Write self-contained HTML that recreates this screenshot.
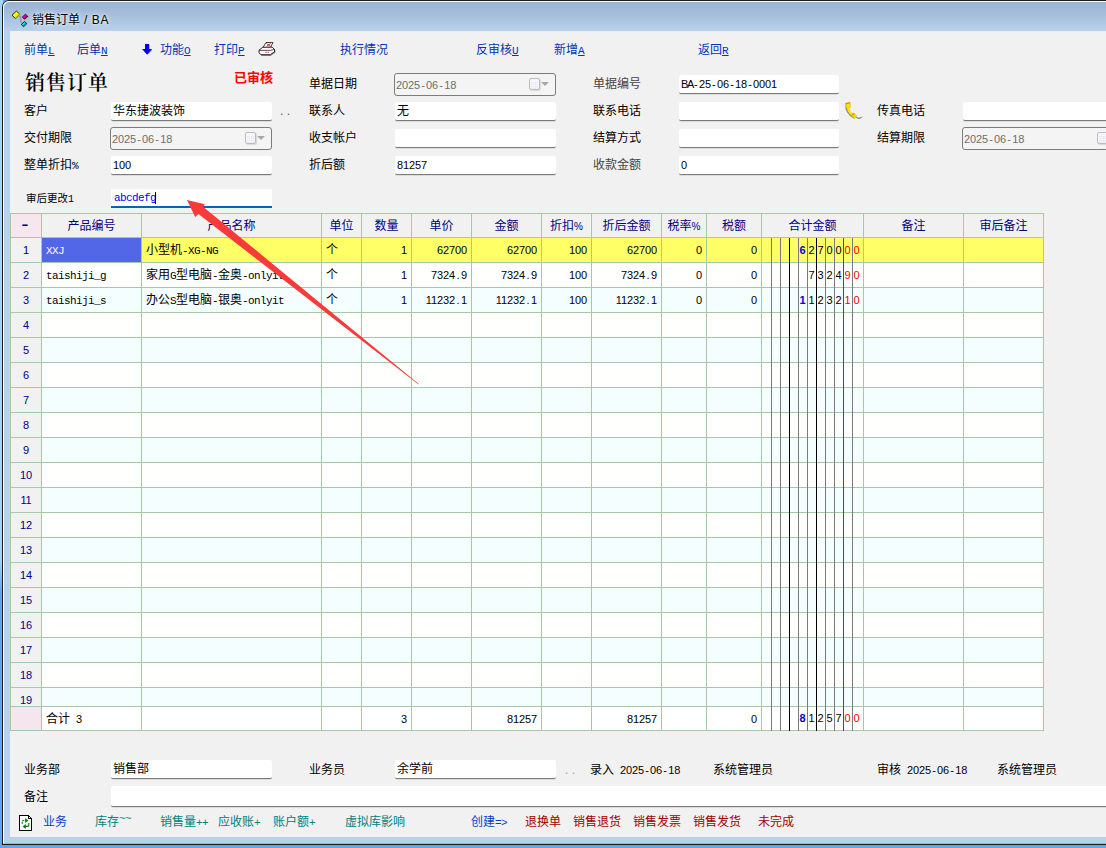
<!DOCTYPE html>
<html lang="zh-CN"><head><meta charset="utf-8"><title>销售订单 / BA</title>
<style>
*{box-sizing:border-box;margin:0;padding:0}
html,body{width:1106px;height:848px;overflow:hidden}
body{position:relative;background:#64a5ee;font:12px/14px "Liberation Sans","Noto Sans CJK SC",sans-serif;color:#000}
#deskL{position:absolute;left:0;top:0;width:3px;height:848px;background:linear-gradient(#a4d6fa 0,#a0d4f9 66%,#64a5ee 70%,#64a5ee)}
#win{position:absolute;left:2px;top:0;width:1200px;height:845px;background:#b9d1ea;border:1px solid #1c1c1c;border-top-left-radius:7px;border-right:0}
#win:before{content:"";position:absolute;left:0;top:0;right:0;bottom:0;border-left:1px solid #fff;border-top:1px solid #fff;border-bottom:1px solid #3fe0f5;border-top-left-radius:6px}
#tbar{position:absolute;left:1px;top:1px;right:0;height:29px;background:linear-gradient(#98b3d2,#a7c0dd 50%,#b9d1ea);border-top-left-radius:6px}
#cl{position:absolute;left:10px;top:31px;width:1100px;height:806px;background:#f1f1f1}
.t{position:absolute;white-space:nowrap;font:12px/14px "Liberation Sans","Noto Sans CJK SC",sans-serif}
.m{font:11px/14px "Liberation Mono","Noto Sans CJK SC",monospace;letter-spacing:-0.6px}
.n,.t.n{font:11px/14px "Liberation Sans","Noto Sans CJK SC",sans-serif;letter-spacing:-0.1px}
.p{display:inline-block;width:6px;text-align:center;letter-spacing:0}
.lk{color:#0433b4}
.lk u,.lk .u{font:11px/14px "Liberation Mono","Noto Sans CJK SC",monospace;text-decoration:underline}
.inp{position:absolute;height:19px;background:#fff;border-bottom:1px solid #7b7b7b;border-radius:2px;box-shadow:0 1px 0 #dcdcdc}
.inp .t{left:2px;top:2px}
.dt{position:absolute;height:23px;border:1px solid #7c7c7c;border-radius:3px;background:#f4f4f4}
.dt .t{left:1px;top:4px;color:#6d6d6d}
.cal{position:absolute;right:15px;top:4px;width:11px;height:12px;border:1px solid #c2baba;border-radius:2px;background:#f4f7ff;box-shadow:1px 1px 1px #d8d8d8}
.cal:before{content:"";position:absolute;left:1px;top:3px;width:7px;height:7px;background:#dfe3ee;background-image:radial-gradient(circle,#f8faff 0.8px,transparent 1px);background-size:2.330px 2.330px}
.dd{position:absolute;right:6px;top:8px;width:0;height:0;border-left:4px solid transparent;border-right:4px solid transparent;border-top:4px solid #a9a9a2}
#grid{position:absolute;left:10px;top:213px;width:1034px;height:518px;background:#a5c9a5;overflow:hidden}
.c{position:absolute;overflow:hidden;white-space:nowrap}
.c>span{position:absolute;top:5px;font:12px/14px "Liberation Sans","Noto Sans CJK SC",sans-serif}
.c>span.m{font:11px/14px "Liberation Mono","Noto Sans CJK SC",monospace;letter-spacing:-0.6px}
.c span.n,.t.n{font:11px/14px "Liberation Sans","Noto Sans CJK SC",sans-serif;letter-spacing:-0.1px}
.h>span{color:#000080;left:0;right:0;text-align:center}
.vl{position:absolute;top:25px;width:1px;height:493px}
</style></head>
<body>
<div id="deskL"></div><div id="win"><div id="tbar"></div></div><div id="cl"></div>
<svg style="position:absolute;left:11px;top:10px" width="18" height="18" viewBox="0 0 18 18">
<path d="M7.900 6.300H9.750V12.200H11.400" fill="none" stroke="#8c8c8c" stroke-width="1"/>
<path d="M1 5.300L5.300 1.100 8.800 4.200 4.600 8.600z" fill="#ffff00" stroke="#000" stroke-width="0.800"/>
<path d="M3.600 7.600L7.800 3.300 8.800 4.200 4.600 8.600z" fill="#d8d800"/>
<path d="M11.400 7L14.500 4.150 16.800 6.500 13.500 9.300z" fill="#f000d0" stroke="#000" stroke-width="0.800"/>
<path d="M12.600 8.400L15.800 5.500 16.500 6.500 13.500 9z" fill="#a00030"/>
<path d="M10.200 14.500L13.500 11.500 15.900 13.600 12.600 16.650z" fill="#00e0e0" stroke="#000" stroke-width="0.800"/>
<path d="M11.600 15.700L14.900 12.700 15.600 13.600 12.600 16.300z" fill="#009898"/>
</svg>
<span class="t" style="left:32px;top:13px;text-shadow:0 0 6px #fff,0 0 3px #fff;">销售订单<span style="letter-spacing:0.6px"> / BA</span></span>
<span class="t lk" style="left:24px;top:43px">前单<span class="u">L</span></span>
<span class="t lk" style="left:77px;top:43px">后单<span class="u">N</span></span>
<svg style="position:absolute;left:142px;top:44px" width="10" height="11" viewBox="0 0 10 11"><path d="M3.600 0.600h4v5h3l-5 5.400-4.500-5.400h2.500z" fill="#404060" opacity="0.550"/><path d="M3 0h4v5h3l-5 5.600-5-5.600h3z" fill="#0000ff"/></svg>
<span class="t lk" style="left:160px;top:43px">功能<span class="u">O</span></span>
<span class="t lk" style="left:214px;top:43px">打印<span class="u">P</span></span>
<svg style="position:absolute;left:258px;top:42px" width="18" height="15" viewBox="0 0 18 15">
<path d="M3.200 13.400h9.300l4.300-3.200v-2" fill="none" stroke="#8c8c8c" stroke-width="1.400"/>
<path d="M5 5.500l3-5h7l-2.600 5z" fill="#fff" stroke="#111" stroke-width="0.800"/>
<path d="M8.600 1.600l3.800 2.600M12.600 1.400l-3.800 2.800" stroke="#e01010" stroke-width="0.900"/>
<path d="M1 8.200l3.800-3h9.400l2.300 2.200v2.400l-4.200 2.900h-9.300l-2-1.900z" fill="#fbfbfb" stroke="#111" stroke-width="0.900"/>
<path d="M1.200 8.400h11.200l4-1" fill="none" stroke="#111" stroke-width="0.700"/>
<path d="M7.400 10.300h1.200M9.600 10.300h1.200" stroke="#e01010" stroke-width="1"/>
</svg>
<span class="t lk" style="left:340px;top:43px">执行情况</span>
<span class="t lk" style="left:476px;top:43px">反审核<span class="u">U</span></span>
<span class="t lk" style="left:554px;top:43px">新增<span class="u">A</span></span>
<span class="t lk" style="left:698px;top:43px">返回<span class="u">R</span></span>
<span class="t" style="left:25px;top:71px;font:600 20px/24px 'Liberation Serif','Noto Serif CJK SC',serif;letter-spacing:1px">销售订单</span>
<span class="t" style="left:234px;top:70px;font:bold 13px/16px 'Liberation Sans','Noto Sans CJK SC',sans-serif;color:#f00">已审核</span>
<span class="t" style="left:309px;top:77px;">单据日期</span>
<div class="dt" style="left:394px;top:73px;width:162px"><span class="t n">2025<span class="p">-</span>06<span class="p">-</span>18</span><i class="cal"></i><i class="dd"></i></div>
<span class="t" style="left:593px;top:77px;color:#444">单据编号</span>
<div class="inp" style="left:679px;top:75px;width:160px;height:19px;"><span class="t n"><span style="letter-spacing:-1.400px">BA</span><span class="p">-</span>25<span class="p">-</span>06<span class="p">-</span>18<span class="p">-</span>0001</span></div>
<span class="t" style="left:24px;top:104px;">客户</span>
<div class="inp" style="left:111px;top:102px;width:161px;height:19px;"><span class="t">华东捷波装饰</span></div>
<span class="t" style="left:280px;top:104px;color:#555;">. .</span>
<span class="t" style="left:309px;top:104px;">联系人</span>
<div class="inp" style="left:395px;top:102px;width:161px;height:19px;"><span class="t">无</span></div>
<span class="t" style="left:593px;top:104px;">联系电话</span>
<div class="inp" style="left:679px;top:102px;width:160px;height:19px;"><span class="t"></span></div>
<svg style="position:absolute;left:844px;top:101px" width="19" height="19" viewBox="0 0 19 19">
<path d="M12.300 16.300c1.600 1.300 4.600 1.400 5.500-.5" fill="none" stroke="#5a5a5a" stroke-width="1"/>
<path d="M3.200 4c-.9 4.600 2.400 9.300 6.600 11.600" fill="none" stroke="#3c5a32" stroke-width="3.400" stroke-linecap="round" opacity="0.600"/>
<path d="M3.800 3.600c-.7 4.600 2.400 9.200 6.400 11.400" fill="none" stroke="#ffe400" stroke-width="2.600" stroke-linecap="round"/>
<path d="M1.500 2.300l4.500-1.100.7 4.900-4.100.9z" fill="#ffe600" stroke="#d4a000" stroke-width="0.400"/>
<path d="M1.500 2.300l4.500-1.100.1 1-4.400 1.200z" fill="#f07818"/>
<path d="M7.700 13.600l2.300-1.500 2.900 2.800-2.700 2.700z" fill="#ffd800" stroke="#d4a000" stroke-width="0.400"/>
<path d="M7.700 13.600l2.300-1.500.7.700-2.400 1.600z" fill="#e09010"/>
</svg>
<span class="t" style="left:877px;top:104px;">传真电话</span>
<div class="inp" style="left:963px;top:102px;width:200px;height:19px;"><span class="t"></span></div>
<span class="t" style="left:24px;top:131px;">交付期限</span>
<div class="dt" style="left:110px;top:127px;width:162px"><span class="t n">2025<span class="p">-</span>06<span class="p">-</span>18</span><i class="cal"></i><i class="dd"></i></div>
<span class="t" style="left:309px;top:131px;">收支帐户</span>
<div class="inp" style="left:395px;top:129px;width:161px;height:19px;"><span class="t"></span></div>
<span class="t" style="left:593px;top:131px;">结算方式</span>
<div class="inp" style="left:679px;top:129px;width:160px;height:19px;"><span class="t"></span></div>
<span class="t" style="left:877px;top:131px;">结算期限</span>
<div class="dt" style="left:962px;top:127px;width:162px"><span class="t n">2025<span class="p">-</span>06<span class="p">-</span>18</span><i class="cal"></i><i class="dd"></i></div>
<span class="t" style="left:24px;top:158px;">整单折扣<span class="m">%</span></span>
<div class="inp" style="left:111px;top:156px;width:161px;height:19px;"><span class="t n">100</span></div>
<span class="t" style="left:309px;top:158px;">折后额</span>
<div class="inp" style="left:395px;top:156px;width:161px;height:19px;"><span class="t n">81257</span></div>
<span class="t" style="left:593px;top:158px;color:#444">收款金额</span>
<div class="inp" style="left:679px;top:156px;width:160px;height:19px;"><span class="t n">0</span></div>
<span class="t" style="left:26px;top:191px;font-size:10.500px;">审后更改<span class="m" style="font-size:10px">1</span></span>
<div class="inp" style="left:111px;top:189px;width:161px;height:19px;border-bottom:2px solid #0a62b8;border-radius:0;box-shadow:none"><span class="t m" style="color:#00f;left:3px;top:2px">abcdefg</span><i style="position:absolute;left:44px;top:3px;width:1px;height:12px;background:#000"></i></div>
<div id="grid"><div class="c h" style="left:1px;top:1px;width:30px;height:23px;background:#f6e6ef"><span><b style="display:inline-block;font:bold 13px/14px Liberation Mono,monospace;transform:scale(1.45,1);position:relative;top:-1.5px;left:-1px">-</b></span></div>
<div class="c h" style="left:32px;top:1px;width:99px;height:23px;background:#f1f1f1"><span>产品编号</span></div>
<div class="c h" style="left:132px;top:1px;width:179px;height:23px;background:#f1f1f1"><span>产品名称</span></div>
<div class="c h" style="left:312px;top:1px;width:39px;height:23px;background:#f1f1f1"><span>单位</span></div>
<div class="c h" style="left:352px;top:1px;width:49px;height:23px;background:#f1f1f1"><span>数量</span></div>
<div class="c h" style="left:402px;top:1px;width:59px;height:23px;background:#f1f1f1"><span>单价</span></div>
<div class="c h" style="left:462px;top:1px;width:69px;height:23px;background:#f1f1f1"><span>金额</span></div>
<div class="c h" style="left:532px;top:1px;width:49px;height:23px;background:#f1f1f1"><span>折扣<i class="n" style="font-style:normal;font-size:10px">%</i></span></div>
<div class="c h" style="left:582px;top:1px;width:69px;height:23px;background:#f1f1f1"><span>折后金额</span></div>
<div class="c h" style="left:652px;top:1px;width:44px;height:23px;background:#f1f1f1"><span>税率<i class="n" style="font-style:normal;font-size:10px">%</i></span></div>
<div class="c h" style="left:697px;top:1px;width:54px;height:23px;background:#f1f1f1"><span>税额</span></div>
<div class="c h" style="left:752px;top:1px;width:101px;height:23px;background:#f1f1f1"><span>合计金额</span></div>
<div class="c h" style="left:854px;top:1px;width:99px;height:23px;background:#f1f1f1"><span>备注</span></div>
<div class="c h" style="left:954px;top:1px;width:79px;height:23px;background:#f1f1f1"><span>审后备注</span></div>
<div class="c" style="left:1px;top:25px;width:30px;height:24px;background:#f1f1f1"><span class="n" style="left:0;right:0;text-align:center;color:#000080">1</span></div>
<div class="c" style="left:32px;top:25px;width:99px;height:24px;background:#5266e8"><span style="left:4px;color:#fff"><i class="m" style="font-style:normal">XXJ</i></span></div>
<div class="c" style="left:132px;top:25px;width:179px;height:24px;background:#ffff66"><span style="left:4px;color:#000">小型机<i class="m" style="font-style:normal">-XG-NG</i></span></div>
<div class="c" style="left:312px;top:25px;width:39px;height:24px;background:#ffff66"><span style="left:4px;color:#000">个</span></div>
<div class="c" style="left:352px;top:25px;width:49px;height:24px;background:#ffff66"><span class="n" style="right:4px;color:#000">1</span></div>
<div class="c" style="left:402px;top:25px;width:59px;height:24px;background:#ffff66"><span class="n" style="right:4px;color:#000">62700</span></div>
<div class="c" style="left:462px;top:25px;width:69px;height:24px;background:#ffff66"><span class="n" style="right:4px;color:#000">62700</span></div>
<div class="c" style="left:532px;top:25px;width:49px;height:24px;background:#ffff66"><span class="n" style="right:4px;color:#000">100</span></div>
<div class="c" style="left:582px;top:25px;width:69px;height:24px;background:#ffff66"><span class="n" style="right:4px;color:#000">62700</span></div>
<div class="c" style="left:652px;top:25px;width:44px;height:24px;background:#ffff66"><span class="n" style="right:4px;color:#000">0</span></div>
<div class="c" style="left:697px;top:25px;width:54px;height:24px;background:#ffff66"><span class="n" style="right:4px;color:#000">0</span></div>
<div class="c" style="left:752px;top:25px;width:101px;height:24px;background:#ffff66"></div>
<div class="c" style="left:854px;top:25px;width:99px;height:24px;background:#ffff66"></div>
<div class="c" style="left:954px;top:25px;width:79px;height:24px;background:#ffff66"></div>
<div class="c" style="left:1px;top:50px;width:30px;height:24px;background:#f1f1f1"><span class="n" style="left:0;right:0;text-align:center;color:#000080">2</span></div>
<div class="c" style="left:32px;top:50px;width:99px;height:24px;background:#fffffd"><span style="left:4px;color:#000"><i class="m" style="font-style:normal">taishiji_g</i></span></div>
<div class="c" style="left:132px;top:50px;width:179px;height:24px;background:#fffffd"><span style="left:4px;color:#000">家用<i class="m" style="font-style:normal">G</i>型电脑<i class="m" style="font-style:normal">-</i>金奥<i class="m" style="font-style:normal">-onlyit</i></span></div>
<div class="c" style="left:312px;top:50px;width:39px;height:24px;background:#fffffd"><span style="left:4px;color:#000">个</span></div>
<div class="c" style="left:352px;top:50px;width:49px;height:24px;background:#fffffd"><span class="n" style="right:4px;color:#000">1</span></div>
<div class="c" style="left:402px;top:50px;width:59px;height:24px;background:#fffffd"><span class="n" style="right:4px;color:#000">7324<span class="p">.</span>9</span></div>
<div class="c" style="left:462px;top:50px;width:69px;height:24px;background:#fffffd"><span class="n" style="right:4px;color:#000">7324<span class="p">.</span>9</span></div>
<div class="c" style="left:532px;top:50px;width:49px;height:24px;background:#fffffd"><span class="n" style="right:4px;color:#000">100</span></div>
<div class="c" style="left:582px;top:50px;width:69px;height:24px;background:#fffffd"><span class="n" style="right:4px;color:#000">7324<span class="p">.</span>9</span></div>
<div class="c" style="left:652px;top:50px;width:44px;height:24px;background:#fffffd"><span class="n" style="right:4px;color:#000">0</span></div>
<div class="c" style="left:697px;top:50px;width:54px;height:24px;background:#fffffd"><span class="n" style="right:4px;color:#000">0</span></div>
<div class="c" style="left:752px;top:50px;width:101px;height:24px;background:#fffffd"></div>
<div class="c" style="left:854px;top:50px;width:99px;height:24px;background:#fffffd"></div>
<div class="c" style="left:954px;top:50px;width:79px;height:24px;background:#fffffd"></div>
<div class="c" style="left:1px;top:75px;width:30px;height:24px;background:#f1f1f1"><span class="n" style="left:0;right:0;text-align:center;color:#000080">3</span></div>
<div class="c" style="left:32px;top:75px;width:99px;height:24px;background:#f5fefe"><span style="left:4px;color:#000"><i class="m" style="font-style:normal">taishiji_s</i></span></div>
<div class="c" style="left:132px;top:75px;width:179px;height:24px;background:#f5fefe"><span style="left:4px;color:#000">办公<i class="m" style="font-style:normal">S</i>型电脑<i class="m" style="font-style:normal">-</i>银奥<i class="m" style="font-style:normal">-onlyit</i></span></div>
<div class="c" style="left:312px;top:75px;width:39px;height:24px;background:#f5fefe"><span style="left:4px;color:#000">个</span></div>
<div class="c" style="left:352px;top:75px;width:49px;height:24px;background:#f5fefe"><span class="n" style="right:4px;color:#000">1</span></div>
<div class="c" style="left:402px;top:75px;width:59px;height:24px;background:#f5fefe"><span class="n" style="right:4px;color:#000">11232<span class="p">.</span>1</span></div>
<div class="c" style="left:462px;top:75px;width:69px;height:24px;background:#f5fefe"><span class="n" style="right:4px;color:#000">11232<span class="p">.</span>1</span></div>
<div class="c" style="left:532px;top:75px;width:49px;height:24px;background:#f5fefe"><span class="n" style="right:4px;color:#000">100</span></div>
<div class="c" style="left:582px;top:75px;width:69px;height:24px;background:#f5fefe"><span class="n" style="right:4px;color:#000">11232<span class="p">.</span>1</span></div>
<div class="c" style="left:652px;top:75px;width:44px;height:24px;background:#f5fefe"><span class="n" style="right:4px;color:#000">0</span></div>
<div class="c" style="left:697px;top:75px;width:54px;height:24px;background:#f5fefe"><span class="n" style="right:4px;color:#000">0</span></div>
<div class="c" style="left:752px;top:75px;width:101px;height:24px;background:#f5fefe"></div>
<div class="c" style="left:854px;top:75px;width:99px;height:24px;background:#f5fefe"></div>
<div class="c" style="left:954px;top:75px;width:79px;height:24px;background:#f5fefe"></div>
<div class="c" style="left:1px;top:100px;width:30px;height:24px;background:#f1f1f1"><span class="n" style="left:0;right:0;text-align:center;color:#000080">4</span></div>
<div class="c" style="left:32px;top:100px;width:99px;height:24px;background:#fffffd"></div>
<div class="c" style="left:132px;top:100px;width:179px;height:24px;background:#fffffd"></div>
<div class="c" style="left:312px;top:100px;width:39px;height:24px;background:#fffffd"></div>
<div class="c" style="left:352px;top:100px;width:49px;height:24px;background:#fffffd"></div>
<div class="c" style="left:402px;top:100px;width:59px;height:24px;background:#fffffd"></div>
<div class="c" style="left:462px;top:100px;width:69px;height:24px;background:#fffffd"></div>
<div class="c" style="left:532px;top:100px;width:49px;height:24px;background:#fffffd"></div>
<div class="c" style="left:582px;top:100px;width:69px;height:24px;background:#fffffd"></div>
<div class="c" style="left:652px;top:100px;width:44px;height:24px;background:#fffffd"></div>
<div class="c" style="left:697px;top:100px;width:54px;height:24px;background:#fffffd"></div>
<div class="c" style="left:752px;top:100px;width:101px;height:24px;background:#fffffd"></div>
<div class="c" style="left:854px;top:100px;width:99px;height:24px;background:#fffffd"></div>
<div class="c" style="left:954px;top:100px;width:79px;height:24px;background:#fffffd"></div>
<div class="c" style="left:1px;top:125px;width:30px;height:24px;background:#f1f1f1"><span class="n" style="left:0;right:0;text-align:center;color:#000080">5</span></div>
<div class="c" style="left:32px;top:125px;width:99px;height:24px;background:#f5fefe"></div>
<div class="c" style="left:132px;top:125px;width:179px;height:24px;background:#f5fefe"></div>
<div class="c" style="left:312px;top:125px;width:39px;height:24px;background:#f5fefe"></div>
<div class="c" style="left:352px;top:125px;width:49px;height:24px;background:#f5fefe"></div>
<div class="c" style="left:402px;top:125px;width:59px;height:24px;background:#f5fefe"></div>
<div class="c" style="left:462px;top:125px;width:69px;height:24px;background:#f5fefe"></div>
<div class="c" style="left:532px;top:125px;width:49px;height:24px;background:#f5fefe"></div>
<div class="c" style="left:582px;top:125px;width:69px;height:24px;background:#f5fefe"></div>
<div class="c" style="left:652px;top:125px;width:44px;height:24px;background:#f5fefe"></div>
<div class="c" style="left:697px;top:125px;width:54px;height:24px;background:#f5fefe"></div>
<div class="c" style="left:752px;top:125px;width:101px;height:24px;background:#f5fefe"></div>
<div class="c" style="left:854px;top:125px;width:99px;height:24px;background:#f5fefe"></div>
<div class="c" style="left:954px;top:125px;width:79px;height:24px;background:#f5fefe"></div>
<div class="c" style="left:1px;top:150px;width:30px;height:24px;background:#f1f1f1"><span class="n" style="left:0;right:0;text-align:center;color:#000080">6</span></div>
<div class="c" style="left:32px;top:150px;width:99px;height:24px;background:#fffffd"></div>
<div class="c" style="left:132px;top:150px;width:179px;height:24px;background:#fffffd"></div>
<div class="c" style="left:312px;top:150px;width:39px;height:24px;background:#fffffd"></div>
<div class="c" style="left:352px;top:150px;width:49px;height:24px;background:#fffffd"></div>
<div class="c" style="left:402px;top:150px;width:59px;height:24px;background:#fffffd"></div>
<div class="c" style="left:462px;top:150px;width:69px;height:24px;background:#fffffd"></div>
<div class="c" style="left:532px;top:150px;width:49px;height:24px;background:#fffffd"></div>
<div class="c" style="left:582px;top:150px;width:69px;height:24px;background:#fffffd"></div>
<div class="c" style="left:652px;top:150px;width:44px;height:24px;background:#fffffd"></div>
<div class="c" style="left:697px;top:150px;width:54px;height:24px;background:#fffffd"></div>
<div class="c" style="left:752px;top:150px;width:101px;height:24px;background:#fffffd"></div>
<div class="c" style="left:854px;top:150px;width:99px;height:24px;background:#fffffd"></div>
<div class="c" style="left:954px;top:150px;width:79px;height:24px;background:#fffffd"></div>
<div class="c" style="left:1px;top:175px;width:30px;height:24px;background:#f1f1f1"><span class="n" style="left:0;right:0;text-align:center;color:#000080">7</span></div>
<div class="c" style="left:32px;top:175px;width:99px;height:24px;background:#f5fefe"></div>
<div class="c" style="left:132px;top:175px;width:179px;height:24px;background:#f5fefe"></div>
<div class="c" style="left:312px;top:175px;width:39px;height:24px;background:#f5fefe"></div>
<div class="c" style="left:352px;top:175px;width:49px;height:24px;background:#f5fefe"></div>
<div class="c" style="left:402px;top:175px;width:59px;height:24px;background:#f5fefe"></div>
<div class="c" style="left:462px;top:175px;width:69px;height:24px;background:#f5fefe"></div>
<div class="c" style="left:532px;top:175px;width:49px;height:24px;background:#f5fefe"></div>
<div class="c" style="left:582px;top:175px;width:69px;height:24px;background:#f5fefe"></div>
<div class="c" style="left:652px;top:175px;width:44px;height:24px;background:#f5fefe"></div>
<div class="c" style="left:697px;top:175px;width:54px;height:24px;background:#f5fefe"></div>
<div class="c" style="left:752px;top:175px;width:101px;height:24px;background:#f5fefe"></div>
<div class="c" style="left:854px;top:175px;width:99px;height:24px;background:#f5fefe"></div>
<div class="c" style="left:954px;top:175px;width:79px;height:24px;background:#f5fefe"></div>
<div class="c" style="left:1px;top:200px;width:30px;height:24px;background:#f1f1f1"><span class="n" style="left:0;right:0;text-align:center;color:#000080">8</span></div>
<div class="c" style="left:32px;top:200px;width:99px;height:24px;background:#fffffd"></div>
<div class="c" style="left:132px;top:200px;width:179px;height:24px;background:#fffffd"></div>
<div class="c" style="left:312px;top:200px;width:39px;height:24px;background:#fffffd"></div>
<div class="c" style="left:352px;top:200px;width:49px;height:24px;background:#fffffd"></div>
<div class="c" style="left:402px;top:200px;width:59px;height:24px;background:#fffffd"></div>
<div class="c" style="left:462px;top:200px;width:69px;height:24px;background:#fffffd"></div>
<div class="c" style="left:532px;top:200px;width:49px;height:24px;background:#fffffd"></div>
<div class="c" style="left:582px;top:200px;width:69px;height:24px;background:#fffffd"></div>
<div class="c" style="left:652px;top:200px;width:44px;height:24px;background:#fffffd"></div>
<div class="c" style="left:697px;top:200px;width:54px;height:24px;background:#fffffd"></div>
<div class="c" style="left:752px;top:200px;width:101px;height:24px;background:#fffffd"></div>
<div class="c" style="left:854px;top:200px;width:99px;height:24px;background:#fffffd"></div>
<div class="c" style="left:954px;top:200px;width:79px;height:24px;background:#fffffd"></div>
<div class="c" style="left:1px;top:225px;width:30px;height:24px;background:#f1f1f1"><span class="n" style="left:0;right:0;text-align:center;color:#000080">9</span></div>
<div class="c" style="left:32px;top:225px;width:99px;height:24px;background:#f5fefe"></div>
<div class="c" style="left:132px;top:225px;width:179px;height:24px;background:#f5fefe"></div>
<div class="c" style="left:312px;top:225px;width:39px;height:24px;background:#f5fefe"></div>
<div class="c" style="left:352px;top:225px;width:49px;height:24px;background:#f5fefe"></div>
<div class="c" style="left:402px;top:225px;width:59px;height:24px;background:#f5fefe"></div>
<div class="c" style="left:462px;top:225px;width:69px;height:24px;background:#f5fefe"></div>
<div class="c" style="left:532px;top:225px;width:49px;height:24px;background:#f5fefe"></div>
<div class="c" style="left:582px;top:225px;width:69px;height:24px;background:#f5fefe"></div>
<div class="c" style="left:652px;top:225px;width:44px;height:24px;background:#f5fefe"></div>
<div class="c" style="left:697px;top:225px;width:54px;height:24px;background:#f5fefe"></div>
<div class="c" style="left:752px;top:225px;width:101px;height:24px;background:#f5fefe"></div>
<div class="c" style="left:854px;top:225px;width:99px;height:24px;background:#f5fefe"></div>
<div class="c" style="left:954px;top:225px;width:79px;height:24px;background:#f5fefe"></div>
<div class="c" style="left:1px;top:250px;width:30px;height:24px;background:#f1f1f1"><span class="n" style="left:0;right:0;text-align:center;color:#000080">10</span></div>
<div class="c" style="left:32px;top:250px;width:99px;height:24px;background:#fffffd"></div>
<div class="c" style="left:132px;top:250px;width:179px;height:24px;background:#fffffd"></div>
<div class="c" style="left:312px;top:250px;width:39px;height:24px;background:#fffffd"></div>
<div class="c" style="left:352px;top:250px;width:49px;height:24px;background:#fffffd"></div>
<div class="c" style="left:402px;top:250px;width:59px;height:24px;background:#fffffd"></div>
<div class="c" style="left:462px;top:250px;width:69px;height:24px;background:#fffffd"></div>
<div class="c" style="left:532px;top:250px;width:49px;height:24px;background:#fffffd"></div>
<div class="c" style="left:582px;top:250px;width:69px;height:24px;background:#fffffd"></div>
<div class="c" style="left:652px;top:250px;width:44px;height:24px;background:#fffffd"></div>
<div class="c" style="left:697px;top:250px;width:54px;height:24px;background:#fffffd"></div>
<div class="c" style="left:752px;top:250px;width:101px;height:24px;background:#fffffd"></div>
<div class="c" style="left:854px;top:250px;width:99px;height:24px;background:#fffffd"></div>
<div class="c" style="left:954px;top:250px;width:79px;height:24px;background:#fffffd"></div>
<div class="c" style="left:1px;top:275px;width:30px;height:24px;background:#f1f1f1"><span class="n" style="left:0;right:0;text-align:center;color:#000080">11</span></div>
<div class="c" style="left:32px;top:275px;width:99px;height:24px;background:#f5fefe"></div>
<div class="c" style="left:132px;top:275px;width:179px;height:24px;background:#f5fefe"></div>
<div class="c" style="left:312px;top:275px;width:39px;height:24px;background:#f5fefe"></div>
<div class="c" style="left:352px;top:275px;width:49px;height:24px;background:#f5fefe"></div>
<div class="c" style="left:402px;top:275px;width:59px;height:24px;background:#f5fefe"></div>
<div class="c" style="left:462px;top:275px;width:69px;height:24px;background:#f5fefe"></div>
<div class="c" style="left:532px;top:275px;width:49px;height:24px;background:#f5fefe"></div>
<div class="c" style="left:582px;top:275px;width:69px;height:24px;background:#f5fefe"></div>
<div class="c" style="left:652px;top:275px;width:44px;height:24px;background:#f5fefe"></div>
<div class="c" style="left:697px;top:275px;width:54px;height:24px;background:#f5fefe"></div>
<div class="c" style="left:752px;top:275px;width:101px;height:24px;background:#f5fefe"></div>
<div class="c" style="left:854px;top:275px;width:99px;height:24px;background:#f5fefe"></div>
<div class="c" style="left:954px;top:275px;width:79px;height:24px;background:#f5fefe"></div>
<div class="c" style="left:1px;top:300px;width:30px;height:24px;background:#f1f1f1"><span class="n" style="left:0;right:0;text-align:center;color:#000080">12</span></div>
<div class="c" style="left:32px;top:300px;width:99px;height:24px;background:#fffffd"></div>
<div class="c" style="left:132px;top:300px;width:179px;height:24px;background:#fffffd"></div>
<div class="c" style="left:312px;top:300px;width:39px;height:24px;background:#fffffd"></div>
<div class="c" style="left:352px;top:300px;width:49px;height:24px;background:#fffffd"></div>
<div class="c" style="left:402px;top:300px;width:59px;height:24px;background:#fffffd"></div>
<div class="c" style="left:462px;top:300px;width:69px;height:24px;background:#fffffd"></div>
<div class="c" style="left:532px;top:300px;width:49px;height:24px;background:#fffffd"></div>
<div class="c" style="left:582px;top:300px;width:69px;height:24px;background:#fffffd"></div>
<div class="c" style="left:652px;top:300px;width:44px;height:24px;background:#fffffd"></div>
<div class="c" style="left:697px;top:300px;width:54px;height:24px;background:#fffffd"></div>
<div class="c" style="left:752px;top:300px;width:101px;height:24px;background:#fffffd"></div>
<div class="c" style="left:854px;top:300px;width:99px;height:24px;background:#fffffd"></div>
<div class="c" style="left:954px;top:300px;width:79px;height:24px;background:#fffffd"></div>
<div class="c" style="left:1px;top:325px;width:30px;height:24px;background:#f1f1f1"><span class="n" style="left:0;right:0;text-align:center;color:#000080">13</span></div>
<div class="c" style="left:32px;top:325px;width:99px;height:24px;background:#f5fefe"></div>
<div class="c" style="left:132px;top:325px;width:179px;height:24px;background:#f5fefe"></div>
<div class="c" style="left:312px;top:325px;width:39px;height:24px;background:#f5fefe"></div>
<div class="c" style="left:352px;top:325px;width:49px;height:24px;background:#f5fefe"></div>
<div class="c" style="left:402px;top:325px;width:59px;height:24px;background:#f5fefe"></div>
<div class="c" style="left:462px;top:325px;width:69px;height:24px;background:#f5fefe"></div>
<div class="c" style="left:532px;top:325px;width:49px;height:24px;background:#f5fefe"></div>
<div class="c" style="left:582px;top:325px;width:69px;height:24px;background:#f5fefe"></div>
<div class="c" style="left:652px;top:325px;width:44px;height:24px;background:#f5fefe"></div>
<div class="c" style="left:697px;top:325px;width:54px;height:24px;background:#f5fefe"></div>
<div class="c" style="left:752px;top:325px;width:101px;height:24px;background:#f5fefe"></div>
<div class="c" style="left:854px;top:325px;width:99px;height:24px;background:#f5fefe"></div>
<div class="c" style="left:954px;top:325px;width:79px;height:24px;background:#f5fefe"></div>
<div class="c" style="left:1px;top:350px;width:30px;height:24px;background:#f1f1f1"><span class="n" style="left:0;right:0;text-align:center;color:#000080">14</span></div>
<div class="c" style="left:32px;top:350px;width:99px;height:24px;background:#fffffd"></div>
<div class="c" style="left:132px;top:350px;width:179px;height:24px;background:#fffffd"></div>
<div class="c" style="left:312px;top:350px;width:39px;height:24px;background:#fffffd"></div>
<div class="c" style="left:352px;top:350px;width:49px;height:24px;background:#fffffd"></div>
<div class="c" style="left:402px;top:350px;width:59px;height:24px;background:#fffffd"></div>
<div class="c" style="left:462px;top:350px;width:69px;height:24px;background:#fffffd"></div>
<div class="c" style="left:532px;top:350px;width:49px;height:24px;background:#fffffd"></div>
<div class="c" style="left:582px;top:350px;width:69px;height:24px;background:#fffffd"></div>
<div class="c" style="left:652px;top:350px;width:44px;height:24px;background:#fffffd"></div>
<div class="c" style="left:697px;top:350px;width:54px;height:24px;background:#fffffd"></div>
<div class="c" style="left:752px;top:350px;width:101px;height:24px;background:#fffffd"></div>
<div class="c" style="left:854px;top:350px;width:99px;height:24px;background:#fffffd"></div>
<div class="c" style="left:954px;top:350px;width:79px;height:24px;background:#fffffd"></div>
<div class="c" style="left:1px;top:375px;width:30px;height:24px;background:#f1f1f1"><span class="n" style="left:0;right:0;text-align:center;color:#000080">15</span></div>
<div class="c" style="left:32px;top:375px;width:99px;height:24px;background:#f5fefe"></div>
<div class="c" style="left:132px;top:375px;width:179px;height:24px;background:#f5fefe"></div>
<div class="c" style="left:312px;top:375px;width:39px;height:24px;background:#f5fefe"></div>
<div class="c" style="left:352px;top:375px;width:49px;height:24px;background:#f5fefe"></div>
<div class="c" style="left:402px;top:375px;width:59px;height:24px;background:#f5fefe"></div>
<div class="c" style="left:462px;top:375px;width:69px;height:24px;background:#f5fefe"></div>
<div class="c" style="left:532px;top:375px;width:49px;height:24px;background:#f5fefe"></div>
<div class="c" style="left:582px;top:375px;width:69px;height:24px;background:#f5fefe"></div>
<div class="c" style="left:652px;top:375px;width:44px;height:24px;background:#f5fefe"></div>
<div class="c" style="left:697px;top:375px;width:54px;height:24px;background:#f5fefe"></div>
<div class="c" style="left:752px;top:375px;width:101px;height:24px;background:#f5fefe"></div>
<div class="c" style="left:854px;top:375px;width:99px;height:24px;background:#f5fefe"></div>
<div class="c" style="left:954px;top:375px;width:79px;height:24px;background:#f5fefe"></div>
<div class="c" style="left:1px;top:400px;width:30px;height:24px;background:#f1f1f1"><span class="n" style="left:0;right:0;text-align:center;color:#000080">16</span></div>
<div class="c" style="left:32px;top:400px;width:99px;height:24px;background:#fffffd"></div>
<div class="c" style="left:132px;top:400px;width:179px;height:24px;background:#fffffd"></div>
<div class="c" style="left:312px;top:400px;width:39px;height:24px;background:#fffffd"></div>
<div class="c" style="left:352px;top:400px;width:49px;height:24px;background:#fffffd"></div>
<div class="c" style="left:402px;top:400px;width:59px;height:24px;background:#fffffd"></div>
<div class="c" style="left:462px;top:400px;width:69px;height:24px;background:#fffffd"></div>
<div class="c" style="left:532px;top:400px;width:49px;height:24px;background:#fffffd"></div>
<div class="c" style="left:582px;top:400px;width:69px;height:24px;background:#fffffd"></div>
<div class="c" style="left:652px;top:400px;width:44px;height:24px;background:#fffffd"></div>
<div class="c" style="left:697px;top:400px;width:54px;height:24px;background:#fffffd"></div>
<div class="c" style="left:752px;top:400px;width:101px;height:24px;background:#fffffd"></div>
<div class="c" style="left:854px;top:400px;width:99px;height:24px;background:#fffffd"></div>
<div class="c" style="left:954px;top:400px;width:79px;height:24px;background:#fffffd"></div>
<div class="c" style="left:1px;top:425px;width:30px;height:24px;background:#f1f1f1"><span class="n" style="left:0;right:0;text-align:center;color:#000080">17</span></div>
<div class="c" style="left:32px;top:425px;width:99px;height:24px;background:#f5fefe"></div>
<div class="c" style="left:132px;top:425px;width:179px;height:24px;background:#f5fefe"></div>
<div class="c" style="left:312px;top:425px;width:39px;height:24px;background:#f5fefe"></div>
<div class="c" style="left:352px;top:425px;width:49px;height:24px;background:#f5fefe"></div>
<div class="c" style="left:402px;top:425px;width:59px;height:24px;background:#f5fefe"></div>
<div class="c" style="left:462px;top:425px;width:69px;height:24px;background:#f5fefe"></div>
<div class="c" style="left:532px;top:425px;width:49px;height:24px;background:#f5fefe"></div>
<div class="c" style="left:582px;top:425px;width:69px;height:24px;background:#f5fefe"></div>
<div class="c" style="left:652px;top:425px;width:44px;height:24px;background:#f5fefe"></div>
<div class="c" style="left:697px;top:425px;width:54px;height:24px;background:#f5fefe"></div>
<div class="c" style="left:752px;top:425px;width:101px;height:24px;background:#f5fefe"></div>
<div class="c" style="left:854px;top:425px;width:99px;height:24px;background:#f5fefe"></div>
<div class="c" style="left:954px;top:425px;width:79px;height:24px;background:#f5fefe"></div>
<div class="c" style="left:1px;top:450px;width:30px;height:24px;background:#f1f1f1"><span class="n" style="left:0;right:0;text-align:center;color:#000080">18</span></div>
<div class="c" style="left:32px;top:450px;width:99px;height:24px;background:#fffffd"></div>
<div class="c" style="left:132px;top:450px;width:179px;height:24px;background:#fffffd"></div>
<div class="c" style="left:312px;top:450px;width:39px;height:24px;background:#fffffd"></div>
<div class="c" style="left:352px;top:450px;width:49px;height:24px;background:#fffffd"></div>
<div class="c" style="left:402px;top:450px;width:59px;height:24px;background:#fffffd"></div>
<div class="c" style="left:462px;top:450px;width:69px;height:24px;background:#fffffd"></div>
<div class="c" style="left:532px;top:450px;width:49px;height:24px;background:#fffffd"></div>
<div class="c" style="left:582px;top:450px;width:69px;height:24px;background:#fffffd"></div>
<div class="c" style="left:652px;top:450px;width:44px;height:24px;background:#fffffd"></div>
<div class="c" style="left:697px;top:450px;width:54px;height:24px;background:#fffffd"></div>
<div class="c" style="left:752px;top:450px;width:101px;height:24px;background:#fffffd"></div>
<div class="c" style="left:854px;top:450px;width:99px;height:24px;background:#fffffd"></div>
<div class="c" style="left:954px;top:450px;width:79px;height:24px;background:#fffffd"></div>
<div class="c" style="left:1px;top:475px;width:30px;height:24px;background:#f1f1f1"><span class="n" style="left:0;right:0;text-align:center;color:#000080">19</span></div>
<div class="c" style="left:32px;top:475px;width:99px;height:24px;background:#f5fefe"></div>
<div class="c" style="left:132px;top:475px;width:179px;height:24px;background:#f5fefe"></div>
<div class="c" style="left:312px;top:475px;width:39px;height:24px;background:#f5fefe"></div>
<div class="c" style="left:352px;top:475px;width:49px;height:24px;background:#f5fefe"></div>
<div class="c" style="left:402px;top:475px;width:59px;height:24px;background:#f5fefe"></div>
<div class="c" style="left:462px;top:475px;width:69px;height:24px;background:#f5fefe"></div>
<div class="c" style="left:532px;top:475px;width:49px;height:24px;background:#f5fefe"></div>
<div class="c" style="left:582px;top:475px;width:69px;height:24px;background:#f5fefe"></div>
<div class="c" style="left:652px;top:475px;width:44px;height:24px;background:#f5fefe"></div>
<div class="c" style="left:697px;top:475px;width:54px;height:24px;background:#f5fefe"></div>
<div class="c" style="left:752px;top:475px;width:101px;height:24px;background:#f5fefe"></div>
<div class="c" style="left:854px;top:475px;width:99px;height:24px;background:#f5fefe"></div>
<div class="c" style="left:954px;top:475px;width:79px;height:24px;background:#f5fefe"></div>
<div class="c" style="left:1px;top:493px;width:30px;height:24px;border-top:1px solid #a5c9a5;background:#f5e5ee"></div>
<div class="c" style="left:32px;top:493px;width:99px;height:24px;border-top:1px solid #a5c9a5;background:#fff"><span style="left:4px">合计<i class="n" style="font-style:normal;margin-left:6px">3</i></span></div>
<div class="c" style="left:132px;top:493px;width:179px;height:24px;border-top:1px solid #a5c9a5;background:#fff"></div>
<div class="c" style="left:312px;top:493px;width:39px;height:24px;border-top:1px solid #a5c9a5;background:#fff"></div>
<div class="c" style="left:352px;top:493px;width:49px;height:24px;border-top:1px solid #a5c9a5;background:#fff"><span class="n" style="right:4px">3</span></div>
<div class="c" style="left:402px;top:493px;width:59px;height:24px;border-top:1px solid #a5c9a5;background:#fff"></div>
<div class="c" style="left:462px;top:493px;width:69px;height:24px;border-top:1px solid #a5c9a5;background:#fff"><span class="n" style="right:4px">81257</span></div>
<div class="c" style="left:532px;top:493px;width:49px;height:24px;border-top:1px solid #a5c9a5;background:#fff"></div>
<div class="c" style="left:582px;top:493px;width:69px;height:24px;border-top:1px solid #a5c9a5;background:#fff"><span class="n" style="right:4px">81257</span></div>
<div class="c" style="left:652px;top:493px;width:44px;height:24px;border-top:1px solid #a5c9a5;background:#fff"></div>
<div class="c" style="left:697px;top:493px;width:54px;height:24px;border-top:1px solid #a5c9a5;background:#fff"><span class="n" style="right:4px">0</span></div>
<div class="c" style="left:752px;top:493px;width:101px;height:24px;border-top:1px solid #a5c9a5;background:#fff"></div>
<div class="c" style="left:854px;top:493px;width:99px;height:24px;border-top:1px solid #a5c9a5;background:#fff"></div>
<div class="c" style="left:954px;top:493px;width:79px;height:24px;border-top:1px solid #a5c9a5;background:#fff"></div>
<div class="vl" style="left:761px;background:#7a7a7a"></div>
<div class="vl" style="left:770px;background:#7a7a7a"></div>
<div class="vl" style="left:779px;background:#000"></div>
<div class="vl" style="left:788px;background:#7a7a7a"></div>
<div class="vl" style="left:797px;background:#7a7a7a"></div>
<div class="vl" style="left:806px;background:#000"></div>
<div class="vl" style="left:815px;background:#7a7a7a"></div>
<div class="vl" style="left:824px;background:#7a7a7a"></div>
<div class="vl" style="left:833px;background:#f00"></div>
<div class="vl" style="left:842px;background:#7a7a7a"></div>
<div class="c" style="left:752px;top:25px;width:102px;height:24px;background:transparent"><span class="n" style="left:36px;width:9px;text-align:center;color:#000;letter-spacing:0;color:#0000e0;font-weight:bold;">6</span><span class="n" style="left:45px;width:9px;text-align:center;color:#000;letter-spacing:0;">2</span><span class="n" style="left:54px;width:9px;text-align:center;color:#000;letter-spacing:0;">7</span><span class="n" style="left:63px;width:9px;text-align:center;color:#000;letter-spacing:0;">0</span><span class="n" style="left:72px;width:9px;text-align:center;color:#000;letter-spacing:0;">0</span><span class="n" style="left:81px;width:9px;text-align:center;color:#f00;letter-spacing:0;">0</span><span class="n" style="left:90px;width:9px;text-align:center;color:#f00;letter-spacing:0;">0</span></div>
<div class="c" style="left:752px;top:50px;width:102px;height:24px;background:transparent"><span class="n" style="left:45px;width:9px;text-align:center;color:#000;letter-spacing:0;">7</span><span class="n" style="left:54px;width:9px;text-align:center;color:#000;letter-spacing:0;">3</span><span class="n" style="left:63px;width:9px;text-align:center;color:#000;letter-spacing:0;">2</span><span class="n" style="left:72px;width:9px;text-align:center;color:#000;letter-spacing:0;">4</span><span class="n" style="left:81px;width:9px;text-align:center;color:#f00;letter-spacing:0;">9</span><span class="n" style="left:90px;width:9px;text-align:center;color:#f00;letter-spacing:0;">0</span></div>
<div class="c" style="left:752px;top:75px;width:102px;height:24px;background:transparent"><span class="n" style="left:36px;width:9px;text-align:center;color:#000;letter-spacing:0;color:#0000e0;font-weight:bold;">1</span><span class="n" style="left:45px;width:9px;text-align:center;color:#000;letter-spacing:0;">1</span><span class="n" style="left:54px;width:9px;text-align:center;color:#000;letter-spacing:0;">2</span><span class="n" style="left:63px;width:9px;text-align:center;color:#000;letter-spacing:0;">3</span><span class="n" style="left:72px;width:9px;text-align:center;color:#000;letter-spacing:0;">2</span><span class="n" style="left:81px;width:9px;text-align:center;color:#f00;letter-spacing:0;">1</span><span class="n" style="left:90px;width:9px;text-align:center;color:#f00;letter-spacing:0;">0</span></div>
<div class="c" style="left:752px;top:493px;width:102px;height:24px;background:transparent"><span class="n" style="left:36px;width:9px;text-align:center;color:#000;letter-spacing:0;color:#0000e0;font-weight:bold;">8</span><span class="n" style="left:45px;width:9px;text-align:center;color:#000;letter-spacing:0;">1</span><span class="n" style="left:54px;width:9px;text-align:center;color:#000;letter-spacing:0;">2</span><span class="n" style="left:63px;width:9px;text-align:center;color:#000;letter-spacing:0;">5</span><span class="n" style="left:72px;width:9px;text-align:center;color:#000;letter-spacing:0;">7</span><span class="n" style="left:81px;width:9px;text-align:center;color:#f00;letter-spacing:0;">0</span><span class="n" style="left:90px;width:9px;text-align:center;color:#f00;letter-spacing:0;">0</span></div></div>
<svg style="position:absolute;left:0;top:0;pointer-events:none" width="1106" height="848"><polygon points="187,200 205,204.200 203,206.700 418.200,383.600 418.900,384.700 198.400,214 195.200,217" fill="#f93a3a"/></svg>
<span class="t" style="left:24px;top:763px;">业务部</span>
<div class="inp" style="left:111px;top:760px;width:161px;height:19px;"><span class="t">销售部</span></div>
<span class="t" style="left:309px;top:763px;">业务员</span>
<div class="inp" style="left:395px;top:760px;width:161px;height:19px;"><span class="t">余学前</span></div>
<span class="t" style="left:565px;top:763px;color:#999;">. .</span>
<span class="t" style="left:590px;top:763px;">录入<span class="n" style="margin-left:6px">2025<span class="p">-</span>06<span class="p">-</span>18</span></span>
<span class="t" style="left:713px;top:763px;">系统管理员</span>
<span class="t" style="left:877px;top:763px;">审核<span class="n" style="margin-left:6px">2025<span class="p">-</span>06<span class="p">-</span>18</span></span>
<span class="t" style="left:997px;top:763px;">系统管理员</span>
<span class="t" style="left:24px;top:790px;">备注</span>
<div class="inp" style="left:111px;top:786px;width:1100px;height:21px;"><span class="t"></span></div>
<svg style="position:absolute;left:19px;top:815px" width="13" height="16" viewBox="0 0 13 16" shape-rendering="crispEdges">
<path d="M0.500 0.500H9.500L12.500 3.500V15.500H0.500Z" fill="#fff" stroke="#000" stroke-width="1"/>
<path d="M9.500 0.500V3.500H12.500" fill="none" stroke="#000" stroke-width="1"/>
<g shape-rendering="geometricPrecision">
<path d="M3.300 8.800V6.600q0-1.100 1.100-1.100H6.500" fill="none" stroke="#008000" stroke-width="1.200" stroke-dasharray="1.800 0.700"/>
<path d="M6.200 3v5l3.300-2.500z" fill="#008000"/>
<path d="M9.800 8v2.300q0 1.100-1.100 1.100H6.500" fill="none" stroke="#008000" stroke-width="1.200"/>
<path d="M6.900 8.900v5l-3.300-2.500z" fill="#008000"/>
</g>
</svg>
<span class="t" style="left:43px;top:815px;color:#0a3cc8">业务</span>
<span class="t" style="left:95px;top:815px;color:#008080">库存<span class="m" style="position:relative;top:-4px">~~</span></span>
<span class="t" style="left:160px;top:815px;color:#008080">销售量<span class="m">++</span></span>
<span class="t" style="left:218px;top:815px;color:#008080">应收账<span class="m">+</span></span>
<span class="t" style="left:273px;top:815px;color:#008080">账户额<span class="m">+</span></span>
<span class="t" style="left:345px;top:815px;color:#008080">虚拟库影响</span>
<span class="t" style="left:471px;top:815px;color:#0a3cc8">创建<span class="m">=&gt;</span></span>
<span class="t" style="left:525px;top:815px;color:#a00000">退换单</span>
<span class="t" style="left:573px;top:815px;color:#a00000">销售退货</span>
<span class="t" style="left:633px;top:815px;color:#a00000">销售发票</span>
<span class="t" style="left:693px;top:815px;color:#a00000">销售发货</span>
<span class="t" style="left:758px;top:815px;color:#a00000">未完成</span>
</body></html>
